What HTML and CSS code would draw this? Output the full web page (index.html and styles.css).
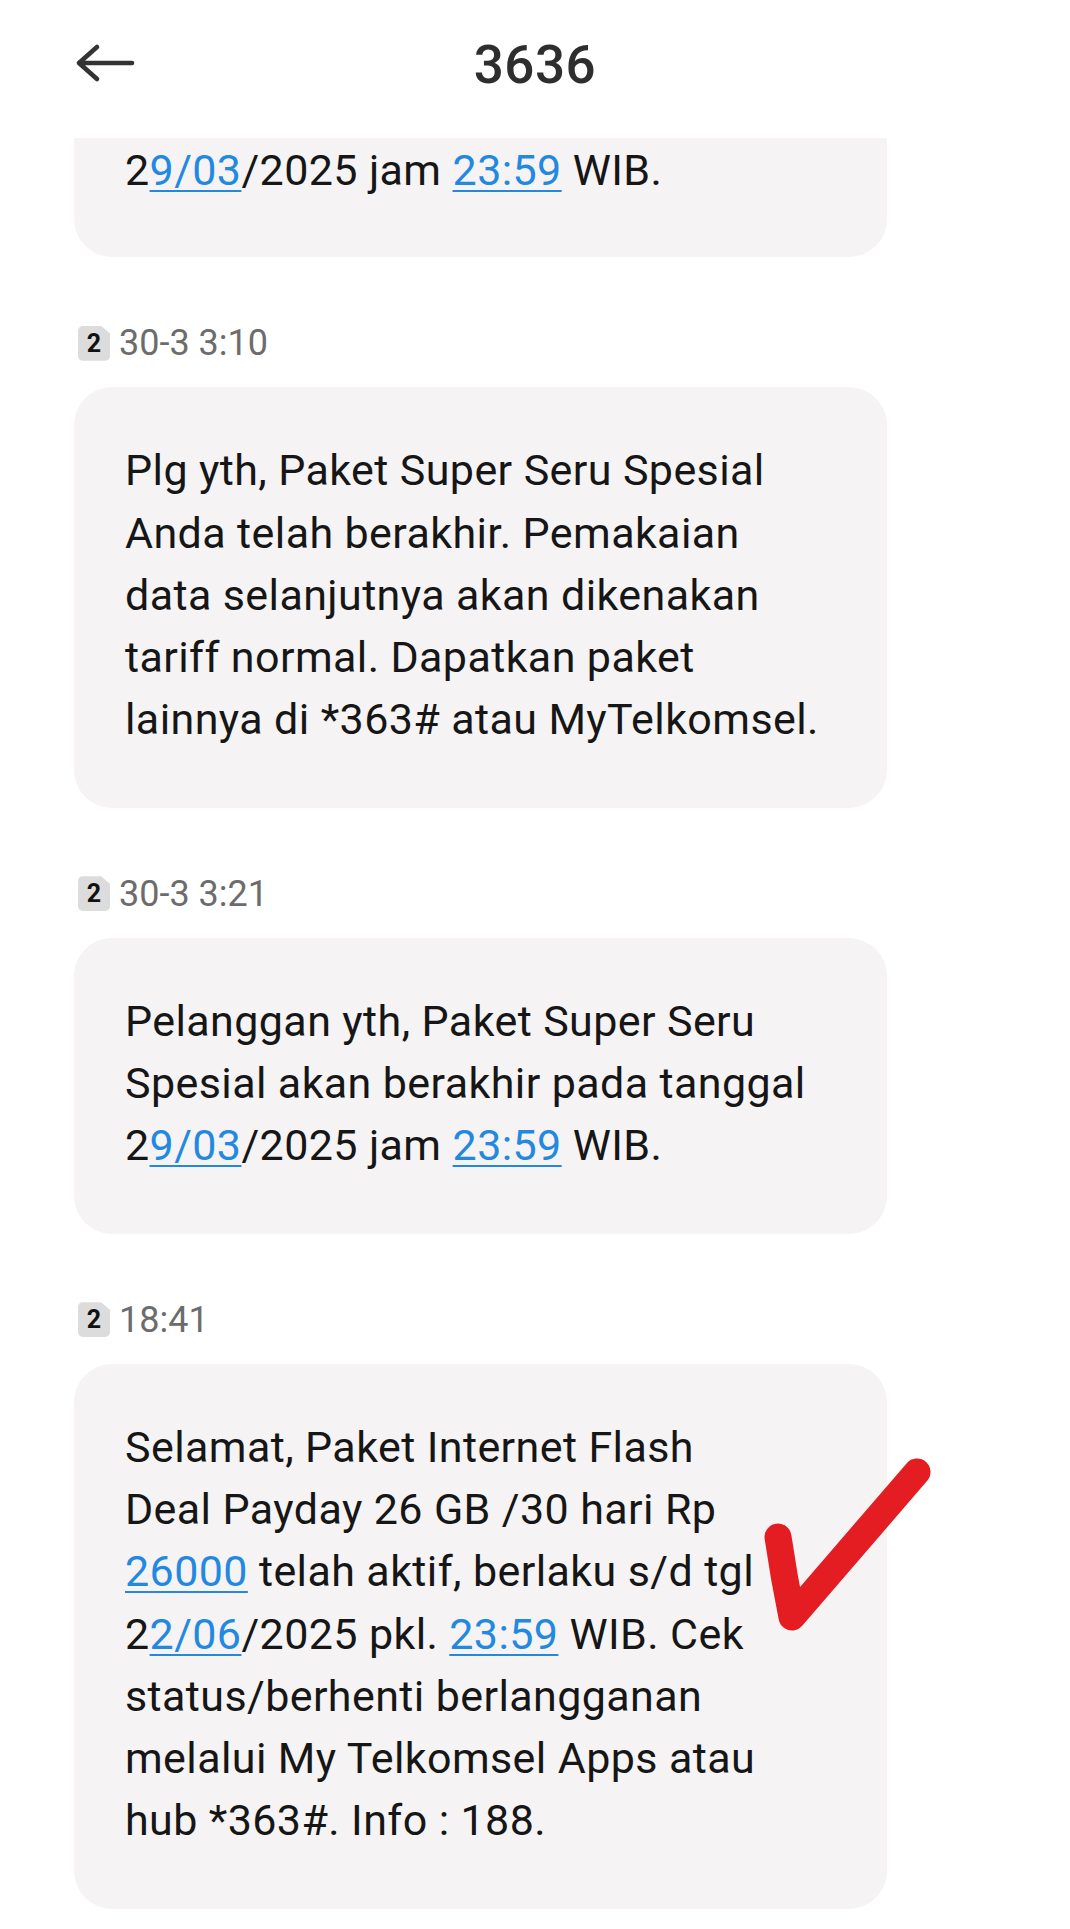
FILE: index.html
```html
<!DOCTYPE html>
<html lang="id">
<head>
<meta charset="utf-8">
<title>3636</title>
<link rel="stylesheet" href="styles.css">
</head>
<body>
<div class="screen">
  <header class="header">
    <div class="back">
      <svg class="back-icon" width="60" height="40" viewBox="0 0 60 40" aria-hidden="true">
        <path d="M4 20 H57 M22 4 L4 20 L22 36" fill="none" stroke="#333" stroke-width="4.6" stroke-linecap="round" stroke-linejoin="round"/>
      </svg>
    </div>
    <h1 class="title">3636</h1>
    <div class="spacer"></div>
  </header>

  <main class="thread">
    <div class="list">
      <div class="bubble bubble-cut">2<a class="link">9/03</a>/2025 jam <a class="link">23:59</a> WIB.</div>

      <div class="meta"><span class="sim">2</span><span class="time">30-3 3:10</span></div>
      <div class="bubble">Plg yth, Paket Super Seru Spesial<br>Anda telah berakhir. Pemakaian<br>data selanjutnya akan dikenakan<br>tariff normal. Dapatkan paket<br>lainnya di *363# atau MyTelkomsel.</div>

      <div class="meta"><span class="sim">2</span><span class="time">30-3 3:21</span></div>
      <div class="bubble">Pelanggan yth, Paket Super Seru<br>Spesial akan berakhir pada tanggal<br>2<a class="link">9/03</a>/2025 jam <a class="link">23:59</a> WIB.</div>

      <div class="meta"><span class="sim">2</span><span class="time">18:41</span></div>
      <div class="bubble">Selamat, Paket Internet Flash<br>Deal Payday 26 GB /30 hari Rp<br><a class="link">26000</a> telah aktif, berlaku s/d tgl<br>2<a class="link">2/06</a>/2025 pkl. <a class="link">23:59</a> WIB. Cek<br>status/berhenti berlangganan<br>melalui My Telkomsel Apps atau<br>hub *363#. Info : 188.</div>
    </div>
  </main>

  <svg class="check" width="200" height="200" viewBox="0 0 200 200" aria-hidden="true">
    <path d="M28 87 Q 34 128 42 167 L 167 22" fill="none" stroke="#e31d21" stroke-width="27" stroke-linecap="round" stroke-linejoin="round"/>
  </svg>
</div>
</body>
</html>
```

FILE: styles.css
```css
html, body {
  margin: 0;
  padding: 0;
  background: #ffffff;
}

body {
  font-family: Roboto, "Noto Sans", "Liberation Sans", sans-serif;
  color: #161616;
}

.screen {
  position: relative;
  width: 1070px;
  height: 1929px;
  overflow: hidden;
  background: #ffffff;
}

.header {
  height: 138px;
  box-sizing: border-box;
  padding-bottom: 12px;
  display: grid;
  grid-template-columns: 1fr auto 1fr;
  align-items: center;
  background: #ffffff;
}

.back {
  padding-left: 75px;
  display: flex;
  align-items: center;
}

.back-icon {
  display: block;
}

.title {
  margin: 0;
  padding-top: 4px;
  font-size: 53px;
  font-weight: 500;
  color: #2e2e2e;
  line-height: 64px;
  letter-spacing: 0.5px;
}

.thread {
  height: 1791px;
  overflow: hidden;
  padding: 0 74px;
}

.list {
  display: flex;
  flex-direction: column;
}

.bubble {
  width: 813px;
  box-sizing: border-box;
  background: #f5f3f4;
  border-radius: 38px;
  padding: 52px 20px 57px 51px;
  font-size: 43px;
  letter-spacing: 0.4px;
  line-height: 62.3px;
  white-space: nowrap;
  color: #161616;
}

.bubble-cut {
  border-top-left-radius: 0;
  border-top-right-radius: 0;
  padding-top: 1px;
  padding-bottom: 56px;
}

.link {
  color: #2389e0;
  text-decoration: underline;
  text-decoration-thickness: 2px;
  text-underline-offset: 5px;
}

.meta {
  margin-top: 66px;
  margin-bottom: 24px;
  height: 40px;
  display: flex;
  align-items: center;
  gap: 9px;
  padding-left: 4px;
}

.sim {
  flex: none;
  width: 32px;
  height: 35px;
  box-sizing: border-box;
  background: #dcdcdc;
  border-radius: 5px;
  clip-path: polygon(0 0, 72% 0, 100% 22%, 100% 100%, 0 100%);
  display: flex;
  align-items: center;
  justify-content: center;
  font-size: 25px;
  font-weight: 700;
  color: #111;
  line-height: 1;
}

.time {
  font-size: 36px;
  color: #6c6c6c;
  line-height: 40px;
}

.check {
  position: absolute;
  left: 750px;
  top: 1450px;
  pointer-events: none;
}
```
